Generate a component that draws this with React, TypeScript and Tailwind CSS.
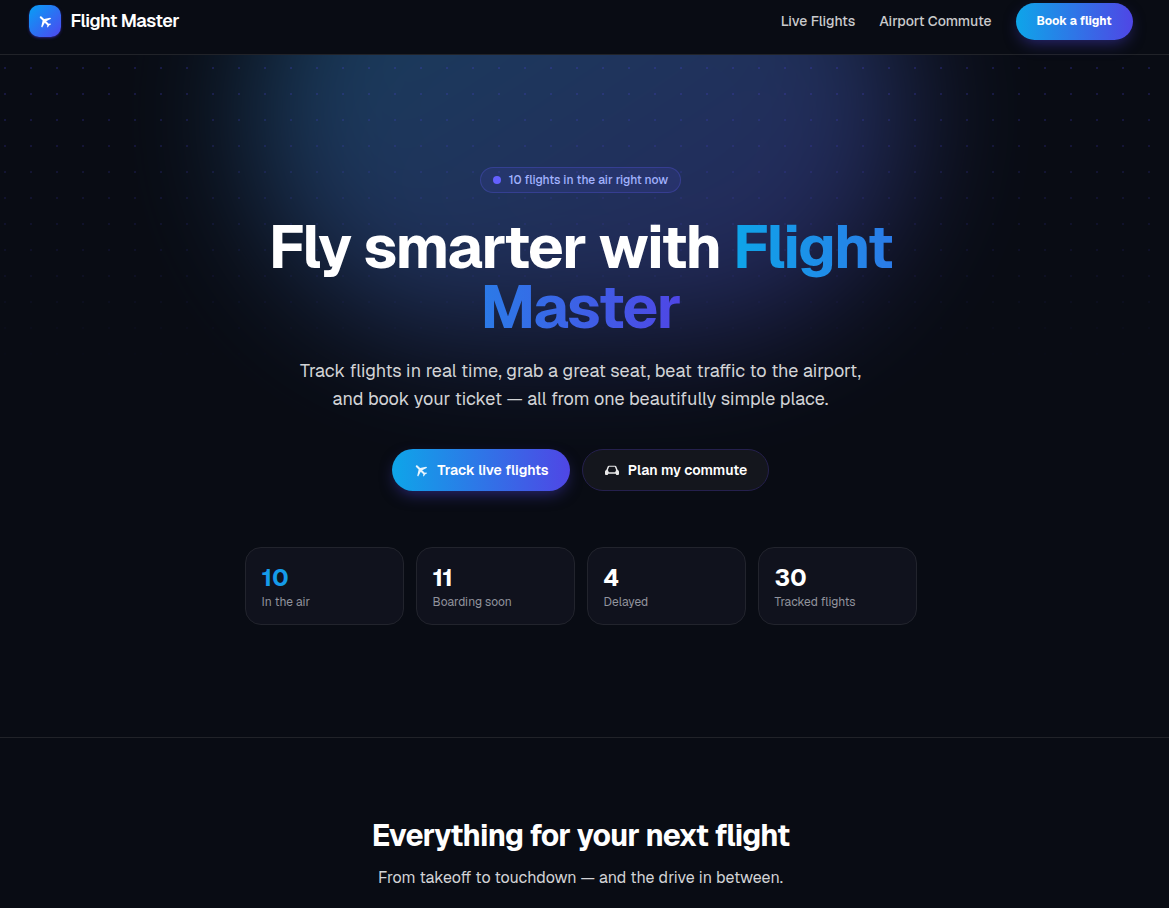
import React from 'react';

interface Stat {
  label: string;
  value: number;
  highlight?: boolean;
}

const stats: Stat[] = [
  { label: 'In the air', value: 10, highlight: true },
  { label: 'Boarding soon', value: 11 },
  { label: 'Delayed', value: 4 },
  { label: 'Tracked flights', value: 30 },
];

const PlaneIcon: React.FC<{ className?: string }> = ({ className }) => (
  <svg viewBox="0 0 24 24" fill="currentColor" className={className} aria-hidden="true">
    <g transform="rotate(-45 12 12)">
      <path d="M21 16v-2l-8-5V3.500a1.500 1.500 0 0 0-3 0V9l-8 5v2l8-2.500V19l-2 1.500V22l3.500-1 3.500 1v-1.500L13 19v-5.500l8 2.500z" />
    </g>
  </svg>
);

const CarIcon: React.FC<{ className?: string }> = ({ className }) => (
  <svg viewBox="0 0 24 24" fill="currentColor" className={className} aria-hidden="true">
    <path
      fillRule="evenodd"
      d="M7.500 5.500h9c.9 0 1.700.5 2 1.300l1.900 4.700c1.300.7 2.100 1.800 2.100 3.200V18c0 .8-.6 1.400-1.400 1.400h-2c-.8 0-1.400-.6-1.400-1.400v-.3H6.300v.3c0 .8-.6 1.400-1.400 1.400h-2c-.8 0-1.400-.6-1.400-1.400v-3.300c0-1.400.8-2.500 2.100-3.200l1.900-4.700c.3-.8 1.100-1.300 2-1.300zM7.700 7.300L5.800 12l1.500 3.400h9.400l1.500-3.400-1.900-4.700z"
    />
  </svg>
);

const Header: React.FC = () => (
  <header className="relative z-10 border-b border-[#212329] pr-2">
    <div className="mx-auto flex h-[54px] max-w-6xl items-center justify-between px-6 pb-3">
      <a href="#home" className="flex items-center gap-2.5">
        <span className="flex size-8 items-center justify-center rounded-[10px] bg-linear-to-br/srgb from-[#06a0f5] to-[#4f46f0] text-white shadow-sm shadow-indigo-600/40">
          <PlaneIcon className="size-4" />
        </span>
        <span className="text-lg font-semibold tracking-tight text-white">Flight Master</span>
      </a>
      <nav className="flex items-center gap-6 text-sm font-medium text-[#c9cacc]">
        <a href="#flights">Live Flights</a>
        <a href="#commute">Airport Commute</a>
        <button
          type="button"
          className="h-[37px] w-[117px] rounded-full bg-linear-to-r/srgb from-[#0ea5e9] to-[#4f46e5] text-xs font-bold text-white shadow-[0_6px_16px_-4px_rgba(79,70,229,0.5)]"
        >
          Book a flight
        </button>
      </nav>
    </div>
  </header>
);

const Hero: React.FC = () => (
  <section className="relative border-b border-[#212329] pr-2">
    <div className="absolute inset-0 overflow-hidden">
      <div className="absolute inset-x-0 -top-40 mr-2 flex justify-center">
        <div className="h-[440px] w-[660px] rounded-full bg-linear-to-br from-[#1ea5e0] to-[#5a4ee0] opacity-35 blur-[64px]"></div>
      </div>
      <div className="absolute inset-0 bg-[radial-gradient(circle,rgba(79,70,229,0.24)_1px,transparent_1px)] mask-[linear-gradient(to_bottom,black,transparent_320px)] bg-size-[26px_26px] bg-position-[-8px_0px]"></div>
    </div>

    <div className="relative mx-auto flex max-w-2xl flex-col items-center py-28 text-center">
      <p className="flex h-[26px] items-center gap-2 rounded-full border border-indigo-500/25 bg-indigo-500/10 px-3 text-xs font-medium text-indigo-300">
        <span className="size-2 rounded-full bg-[#6460ff]"></span>
        10 flights in the air right now
      </p>
      <h1 className="mt-6 text-6xl leading-[60px] font-bold tracking-tight text-white">
        Fly smarter with{' '}
        <span className="bg-linear-to-r/srgb from-[#0ea5e9] to-[#4f46e5] bg-clip-text text-transparent">
          Flight Master
        </span>
      </h1>
      <p className="mt-5 max-w-xl text-lg leading-7 text-[#d2d3d6]">
        Track flights in real time, grab a great seat, beat traffic to the airport, and book your ticket — all from one
        beautifully simple place.
      </p>

      <div className="mt-9 flex gap-3 text-sm font-semibold text-white">
        <button
          type="button"
          className="flex h-[42px] w-[178px] items-center justify-center gap-2 rounded-full bg-linear-to-r/srgb from-[#0ea5e9] to-[#4f46e5] shadow-[0_6px_16px_-4px_rgba(79,70,229,0.5)]"
        >
          <PlaneIcon className="size-4 opacity-90" />
          Track live flights
        </button>
        <button
          type="button"
          className="flex h-[42px] w-[187px] items-center justify-center gap-2 rounded-full border border-[#25204d] bg-[#14161d]"
        >
          <CarIcon className="size-4 opacity-90" />
          Plan my commute
        </button>
      </div>

      <dl className="mt-14 grid w-full grid-cols-4 gap-3 text-left">
        {stats.map((stat) => (
          <div
            key={stat.label}
            className="flex flex-col-reverse rounded-2xl border border-[#22242d] bg-[#10121d] px-4 py-3.5"
          >
            <dt className="text-xs leading-4 text-[#92949d]">{stat.label}</dt>
            <dd className={`text-2xl leading-8 font-bold ${stat.highlight ? 'text-[#159be9]' : 'text-white'}`}>
              {stat.value}
            </dd>
          </div>
        ))}
      </dl>
    </div>
  </section>
);

export default function App() {
  return (
    <div className="min-h-screen bg-[#090c14] font-['Geist','Inter',sans-serif]">
      <Header />
      <main>
        <Hero />
        <section className="pt-20 pr-2 pb-4 text-center">
          <h2 className="text-3xl leading-9 font-bold tracking-tight text-white">Everything for your next flight</h2>
          <p className="mt-3 text-base text-[#d2d3d6]">From takeoff to touchdown — and the drive in between.</p>
        </section>
      </main>
    </div>
  );
}
